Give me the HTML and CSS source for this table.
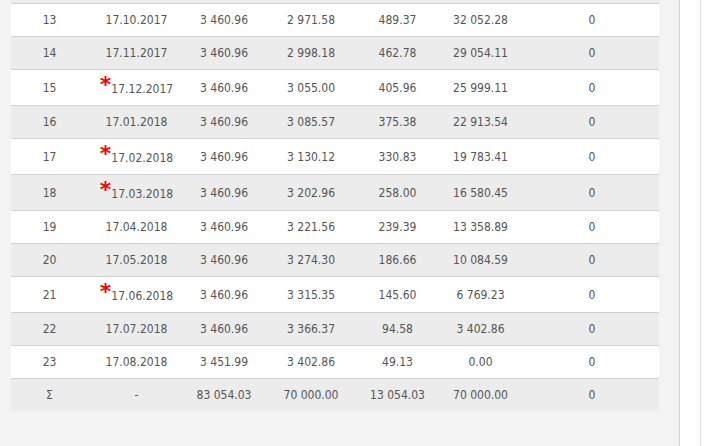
FILE: index.html
```html
<!DOCTYPE html>
<html lang="ru">
<head>
<meta charset="utf-8">
<title>График платежей</title>
<link rel="stylesheet" href="styles.css">
</head>
<body>
<div class="layout">
  <main class="content">
    <table class="schedule">
      <colgroup>
        <col class="c-num"><col class="c-date"><col class="c-pay"><col class="c-body"><col class="c-pct"><col class="c-rest"><col class="c-extra">
      </colgroup>
      <tbody>
        <tr class="cut"><td colspan="7"></td></tr>
        <tr class="odd"><td>13</td><td>17.10.2017</td><td>3&nbsp;460.96</td><td>2&nbsp;971.58</td><td>489.37</td><td>32&nbsp;052.28</td><td>0</td></tr>
        <tr class="even"><td>14</td><td>17.11.2017</td><td>3&nbsp;460.96</td><td>2&nbsp;998.18</td><td>462.78</td><td>29&nbsp;054.11</td><td>0</td></tr>
        <tr class="odd"><td>15</td><td><span class="mark">*</span>17.12.2017</td><td>3&nbsp;460.96</td><td>3&nbsp;055.00</td><td>405.96</td><td>25&nbsp;999.11</td><td>0</td></tr>
        <tr class="even"><td>16</td><td>17.01.2018</td><td>3&nbsp;460.96</td><td>3&nbsp;085.57</td><td>375.38</td><td>22&nbsp;913.54</td><td>0</td></tr>
        <tr class="odd"><td>17</td><td><span class="mark">*</span>17.02.2018</td><td>3&nbsp;460.96</td><td>3&nbsp;130.12</td><td>330.83</td><td>19&nbsp;783.41</td><td>0</td></tr>
        <tr class="even"><td>18</td><td><span class="mark">*</span>17.03.2018</td><td>3&nbsp;460.96</td><td>3&nbsp;202.96</td><td>258.00</td><td>16&nbsp;580.45</td><td>0</td></tr>
        <tr class="odd"><td>19</td><td>17.04.2018</td><td>3&nbsp;460.96</td><td>3&nbsp;221.56</td><td>239.39</td><td>13&nbsp;358.89</td><td>0</td></tr>
        <tr class="even"><td>20</td><td>17.05.2018</td><td>3&nbsp;460.96</td><td>3&nbsp;274.30</td><td>186.66</td><td>10&nbsp;084.59</td><td>0</td></tr>
        <tr class="odd"><td>21</td><td><span class="mark">*</span>17.06.2018</td><td>3&nbsp;460.96</td><td>3&nbsp;315.35</td><td>145.60</td><td>6&nbsp;769.23</td><td>0</td></tr>
        <tr class="even"><td>22</td><td>17.07.2018</td><td>3&nbsp;460.96</td><td>3&nbsp;366.37</td><td>94.58</td><td>3&nbsp;402.86</td><td>0</td></tr>
        <tr class="odd"><td>23</td><td>17.08.2018</td><td>3&nbsp;451.99</td><td>3&nbsp;402.86</td><td>49.13</td><td>0.00</td><td>0</td></tr>
        <tr class="even total"><td>Σ</td><td>-</td><td>83&nbsp;054.03</td><td>70&nbsp;000.00</td><td>13&nbsp;054.03</td><td>70&nbsp;000.00</td><td>0</td></tr>
      </tbody>
    </table>
  </main>
  <aside class="side"></aside>
  <div class="rest"></div>
</div>
</body>
</html>
```

FILE: styles.css
```css
html, body {
  margin: 0;
  padding: 0;
}

body {
  background: #ffffff;
  font-family: "DejaVu Sans Condensed", "DejaVu Sans", sans-serif;
  font-size: 12px;
  color: #555555;
}

.layout {
  display: flex;
  height: 100vh;
}

.content {
  flex: 0 0 679px;
  box-sizing: border-box;
  padding-left: 11px;
  background: #f3f3f3;
}

.side {
  flex: 0 0 20px;
  background: #ffffff;
  border-left: 1px solid #d0d0d0;
  border-right: 1px solid #e2e2e2;
}

.rest {
  flex: 1 1 auto;
  background: #ffffff;
}

.schedule {
  width: 648px;
  border-collapse: collapse;
  table-layout: fixed;
}

.c-num { width: 77px; }
.c-date { width: 97px; }
.c-pay { width: 78px; }
.c-body { width: 96px; }
.c-pct { width: 77px; }
.c-rest { width: 89px; }
.c-extra { width: 134px; }

.schedule td {
  padding: 9px 0;
  line-height: 14px;
  text-align: center;
  white-space: nowrap;
  border-top: 1px solid #d2d2d2;
}

.schedule tr.cut td {
  height: 3px;
  padding: 0;
  border-top: 0;
  background: #ececec;
}

.odd { background: #ffffff; }
.even { background: #ececec; }

.mark {
  color: #ff0000;
  font-family: "DejaVu Sans", sans-serif;
  font-weight: bold;
  font-size: 22px;
  line-height: 11px;
  vertical-align: 1px;
}
```
